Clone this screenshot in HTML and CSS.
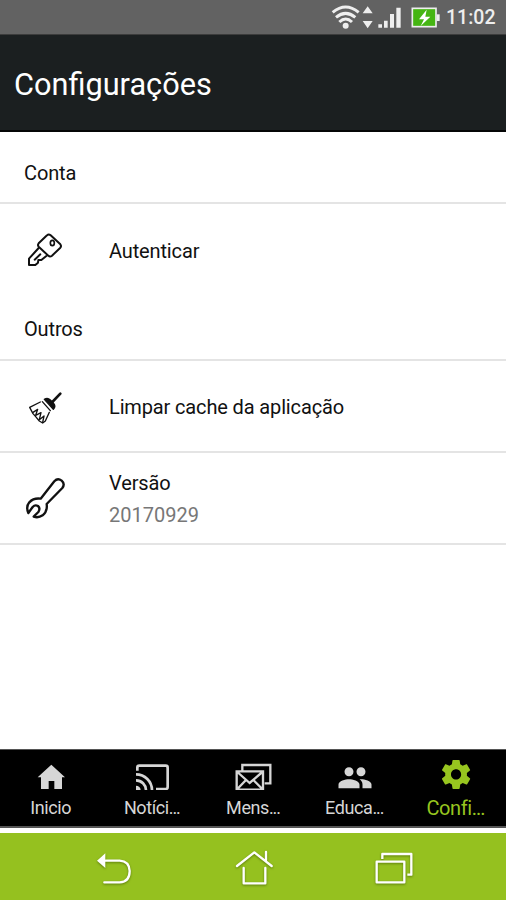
FILE: index.html
```html
<!DOCTYPE html>
<html lang="pt">
<head>
<meta charset="utf-8">
<title>Configurações</title>
<link rel="stylesheet" href="styles.css">
</head>
<body>
<div class="screen">
  <div class="status">
    <svg class="status-icons" viewBox="0 0 366 102" fill="none" stroke="#eee">
      <g stroke-width="9"><path d="M38 37Q77 5 116 37"/><path d="M48 52Q77 28 106 52"/><path d="M58 66Q77 48 96 66"/></g>
      <circle cx="77" cy="77" r="9" fill="#eee" stroke="none"/>
      <path d="M143 19l15 21h-30zM143 85l15-22h-30z" fill="#eee" stroke="none"/>
      <path d="M175 73h11v10h-11zM192 62h11v21h-11zM210 42h12v41h-12zM229 23h13v60h-13z" fill="#eee" stroke="none"/>
      <rect x="277" y="25" width="71" height="55" fill="#45b512" stroke-width="5"/>
      <path d="M350 43h9v20h-9z" fill="#eee" stroke="none"/>
      <path d="M320 29l-23 29h15l-10 20 29-28h-15z" fill="#fff" stroke="none"/>
    </svg>
    <span class="clock">11:02</span>
  </div>
  <header class="header"><h1>Configurações</h1></header>
  <main class="content">
    <h2 class="section first">Conta</h2>
    <div class="row auth">
      <svg class="row-icon" viewBox="0 0 210 150" fill="none" stroke="#111" stroke-width="6" stroke-linejoin="round" stroke-linecap="round">
        <path d="M96 31Q101 26 107 31L136 58Q140 63 136 68L111 92Q105 97 100 92L71 65Q67 60 71 55Z"/>
        <path d="M71 69L42 101V120H61L69 113L70 105L79 105L94 93M59 104L76 88"/>
        <ellipse cx="112" cy="54" rx="6" ry="8" stroke-width="5"/>
      </svg>
      <span>Autenticar</span>
    </div>
    <h2 class="section second">Outros</h2>
    <div class="row">
      <svg class="row-icon" viewBox="0 0 210 150" fill="none" stroke="#111" stroke-width="4" stroke-linejoin="round" stroke-linecap="round">
        <path d="M136 35L109 63" stroke-width="8"/>
        <path d="M88 52Q98 46 106 54L115 63Q124 73 115 82Z" fill="#111"/>
        <path d="M82 59L106 86"/>
        <path d="M76 60L44 76L54 95L62 104L73 117L83 123L91 117L103 91"/>
        <path d="M54 91L68 82L62 100L78 92L73 113L87 102L83 121"/>
      </svg>
      <span>Limpar cache da aplicação</span>
    </div>
    <div class="row version">
      <svg class="row-icon" viewBox="0 0 210 150" fill="none" stroke="#111" stroke-width="7" stroke-linejoin="round">
        <path d="M77 74L118 22Q128 11 140 20Q151 30 142 42L95 90Q98 112 83 124Q70 133 56 128L70 114Q77 103 69 96Q60 91 53 99L40 117Q32 98 43 85Q56 71 77 74Z"/>
      </svg>
      <div class="lines"><span>Versão</span><span class="muted">20170929</span></div>
    </div>
  </main>
  <nav class="tabs">
    <div class="tab"><svg viewBox="0 0 150 120" fill="#d6d6d6"><path d="M76 44L117 82H108V117H85V93H68V117H45V82H35Z"/></svg><span>Inicio</span></div>
    <div class="tab"><svg viewBox="0 0 150 120" fill="none" stroke="#d6d6d6" stroke-width="8"><path d="M31 62V53Q31 47 37 47H116Q122 47 122 53V111Q122 117 116 117H87" /><path d="M27 73A48 48 0 0 1 75 121M27 91A30 30 0 0 1 57 121"/><path d="M27 107A14 14 0 0 1 41 121H27Z" fill="#d6d6d6" stroke="none"/></svg><span>Notíci<i>...</i></span></div>
    <div class="tab"><svg viewBox="0 0 150 120" fill="none" stroke="#d6d6d6" stroke-width="7"><path d="M43 61V45H127V100H110M26 64H105V119H26ZM28 66L65 99L103 66M28 117L54 90M103 117L76 90"/></svg><span>Mens<i>...</i></span></div>
    <div class="tab"><svg viewBox="0 0 150 120" fill="#d6d6d6"><g transform="translate(24 29) scale(4.5)"><path d="M16 11c1.66 0 2.99-1.34 2.99-3S17.660 5 16 5s-3 1.340-3 3 1.340 3 3 3zm-8 0c1.660 0 2.990-1.340 2.990-3S9.660 5 8 5 5 6.340 5 8s1.340 3 3 3zm0 2c-2.330 0-7 1.170-7 3.500V19h14v-2.500C15 14.170 10.330 13 8 13zm8 0c-.290 0-.620.020-.970.050C16.190 13.890 17 15.020 17 16.500V19h6v-2.500C23 14.170 18.330 13 16 13z"/></g></svg><span>Educa<i>...</i></span></div>
    <div class="tab active"><svg viewBox="0 0 150 120" fill="#97c51f"><g transform="translate(26 21) scale(4.35)"><path d="M19.430 12.980c.040-.320.070-.640.070-.980s-.030-.660-.070-.980l2.110-1.650c.190-.150.240-.420.120-.640l-2-3.460c-.120-.220-.390-.300-.610-.220l-2.490 1c-.520-.400-1.080-.730-1.690-.980l-.380-2.650A.49.49 0 0 0 14 2h-4c-.250 0-.460.180-.490.420l-.380 2.650c-.610.250-1.170.590-1.690.980l-2.490-1c-.230-.090-.490 0-.610.220l-2 3.460c-.130.220-.070.490.120.640l2.110 1.650c-.040.320-.070.650-.070.980s.030.660.070.980l-2.110 1.650c-.190.150-.240.420-.120.640l2 3.460c.120.220.390.300.610.220l2.490-1c.520.400 1.080.730 1.690.980l.380 2.650c.030.240.240.420.490.420h4c.250 0 .460-.180.490-.420l.380-2.650c.610-.250 1.170-.590 1.690-.980l2.490 1c.230.090.490 0 .610-.220l2-3.460c.120-.220.070-.490-.120-.640l-2.110-1.650zM12 15.500c-1.930 0-3.500-1.570-3.500-3.500s1.570-3.500 3.500-3.500 3.500 1.570 3.500 3.500-1.570 3.500-3.500 3.500z"/></g></svg><span>Confi<i>...</i></span></div>
  </nav>
  <div class="softkeys">
    <svg viewBox="0 0 120 120" fill="none" stroke="#fff" stroke-width="7" stroke-linecap="round"><path d="M32 38H74Q103 40 104 69Q104 102 74 103H28"/><path d="M6 38L31 16V60Z" fill="#fff" stroke="none"/></svg>
    <svg viewBox="0 0 120 120" fill="none" stroke="#fff" stroke-width="7" stroke-linecap="round" stroke-linejoin="round"><path d="M6 54L58 13L110 54M93 37V12M26 60V106H91V60"/></svg>
    <svg viewBox="0 0 120 120" fill="none" stroke="#fff" stroke-width="7" stroke-linejoin="round"><path d="M25 33V18H112V80H100M8 41H91V103H8Z"/></svg>
  </div>
</div>
</body>
</html>
```
FILE: styles.css
```css
* { box-sizing: border-box; }
body { margin: 0; background: #fff; font-family: Roboto, "Liberation Sans", sans-serif; }
.screen { width: 506px; height: 900px; display: flex; flex-direction: column; overflow: hidden; }
svg { display: block; flex: none; }
.status { height: 35px; background: #626262; border-bottom: 1px solid #3c3c3c; display: flex; justify-content: flex-end; align-items: center; padding-right: 10px; }
.status-icons { width: 122px; height: 34px; margin-right: 4px; }
.clock { width: 50px; font-size: 19.5px; font-weight: 500; line-height: 34px; color: #eee; white-space: nowrap; padding-top: 2px; }
.header { height: 97px; background: #1b1f20; border-bottom: 2px solid #050606; display: flex; align-items: center; padding: 4px 0 0 14px; }
h1 { margin: 0; font-size: 30.7px; font-weight: 400; color: #fff; line-height: 40px; }
.content { flex: 1; color: #111; font-size: 20px; letter-spacing: -0.14px; }
.section { margin: 0; font-size: 20px; font-weight: 400; padding: 10px 24px 0; border-bottom: 2px solid #e4e4e4; line-height: 62px; }
.first { height: 72px; }
.second { height: 65px; padding-top: 2px; }
.row { height: 92px; border-bottom: 2px solid #e4e4e4; display: flex; align-items: center; padding: 2px 0 0 15px; }
.row.auth { border-bottom: 0; }
.row-icon { width: 70px; height: 50px; margin-right: 24px; }
.row.auth .row-icon { margin-bottom: 2px; }
.lines { display: flex; flex-direction: column; line-height: 32px; }
.muted { color: #777; letter-spacing: 0; }
.tabs { height: 79px; background: #000; border-top: 1px solid #555; border-bottom: 2px solid #555; display: flex; }
.tab { flex: 1; display: flex; flex-direction: column; align-items: center; color: #d6d6d6; font-size: 18px; line-height: 24px; min-width: 0; white-space: nowrap; letter-spacing: -0.4px; }
.tab svg { width: 50px; height: 40px; margin-bottom: 6px; }
.tab i { font-style: normal; letter-spacing: -1.1px; }
.active { color: #97c51f; font-size: 20px; }
.softkeys { height: 67px; margin-top: 5px; background: #95c11f; display: flex; justify-content: space-between; align-items: center; padding: 2px 92px 0 95px; }
.softkeys svg { width: 40px; height: 40px; filter: drop-shadow(0 1px 1px #5d7d0d); }
```
